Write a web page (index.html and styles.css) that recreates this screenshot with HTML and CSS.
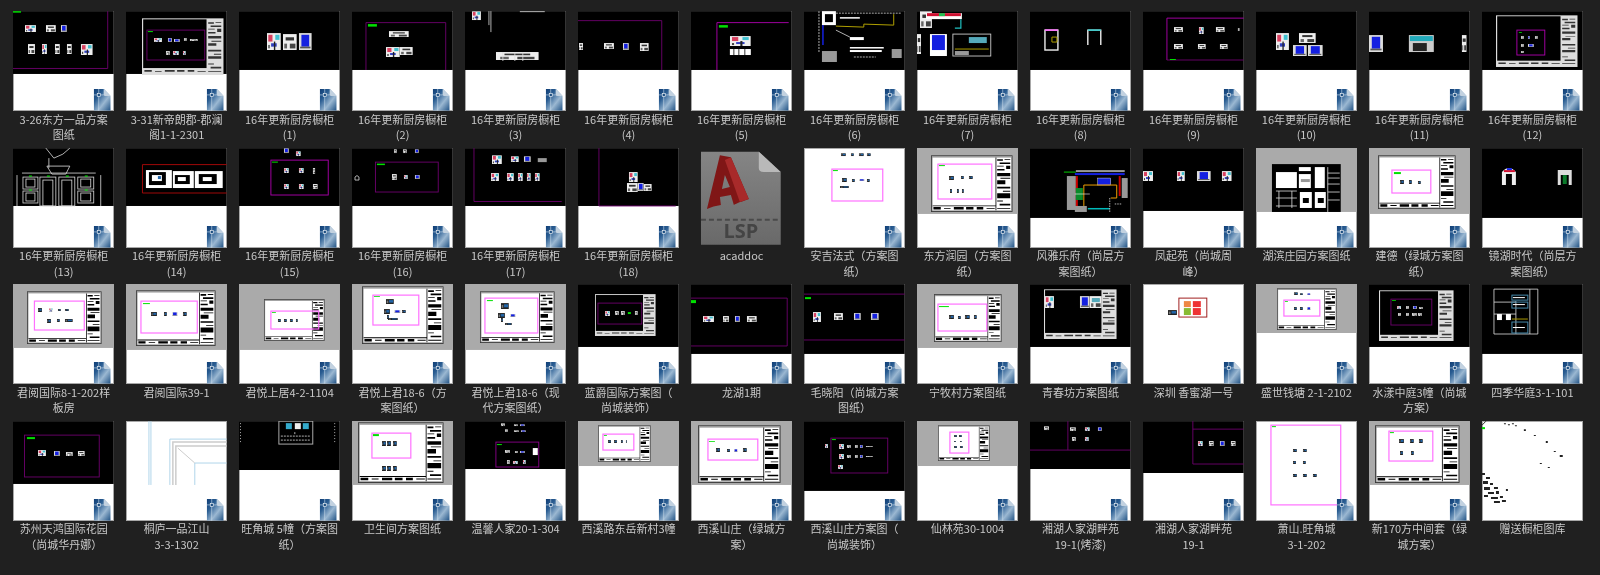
FILE: index.html
```html
<!DOCTYPE html>
<html lang="zh-CN">
<head>
<meta charset="utf-8">
<title>图纸文件夹</title>
<link rel="stylesheet" href="styles.css">
</head>
<body>
<svg class="defs" aria-hidden="true">
<defs>
<linearGradient id="dg" x1="0" y1="0" x2="1" y2="1"><stop offset="0" stop-color="#0f3d75"/><stop offset=".3" stop-color="#2a5d92"/><stop offset=".62" stop-color="#9bb8d2"/><stop offset="1" stop-color="#1d4f82"/></linearGradient>
<linearGradient id="pg" x1="0" y1="0" x2="0" y2="1"><stop offset="0" stop-color="#858585"/><stop offset="1" stop-color="#696969"/></linearGradient>
<symbol id="doc" viewBox="0 0 17 22" preserveAspectRatio="none"><path d="M0 0H10L17 7V22H0Z" fill="url(#dg)"/><path d="M10 0L17 7H11L10 6Z" fill="#c3d2e0"/><path d="M5 0V22M0 6H10" stroke="#cfe0ee" stroke-width=".6" fill="none"/><rect x="3.5" y="4.5" width="3" height="3" fill="#1d4f82" stroke="#fff" stroke-width=".6"/></symbol>
<symbol id="c" viewBox="0 0 10 10" preserveAspectRatio="none"><rect width="10" height="10" fill="#eee"/><rect x="1" y="1" width="3" height="4" fill="#d84060"/><rect x="6" y="1" width="3" height="3" fill="#40c0d0"/><rect x="3" y="6" width="4" height="2" fill="#3040c0"/><rect x="5" y="5" width="1" height="5" fill="#222"/><rect x="1" y="7" width="1" height="2" fill="#444"/></symbol>
<symbol id="u" viewBox="0 0 10 10" preserveAspectRatio="none"><rect width="10" height="10" fill="#ddd"/><rect x="2" y="1" width="6" height="7" fill="#1420e0"/><rect x="1" y="8" width="8" height="1" fill="#555"/></symbol>
<symbol id="o" viewBox="0 0 10 10" preserveAspectRatio="none"><rect width="10" height="10" fill="#eee"/><rect x="2" y="2" width="6" height="2" fill="#333"/><rect x="1" y="6" width="2" height="3" fill="#666"/><rect x="5" y="6" width="4" height="3" fill="#444"/></symbol>
<symbol id="d" viewBox="0 0 10 10" preserveAspectRatio="none"><rect width="10" height="10" fill="#222"/><rect x="4" y="2" width="5" height="5" fill="#26a"/><rect x="1" y="3" width="2" height="5" fill="#777"/></symbol>
<symbol id="sw" viewBox="0 0 100 70" preserveAspectRatio="none"><rect width="100" height="70" fill="#333"/><rect x="1" y="1" width="98" height="68" fill="#999"/><rect x="2" y="3" width="96" height="65" fill="#fff"/><path d="M79 3h1v65h-1zM2 62h77v1H2zM81 5h7v2h-7zM90 5h7v1h-7zM84 9h13v2h-13zM81 13h8v1h-8zM92 13h5v4h-5zM81 17h9v2h-9zM81 22h16v4h-16zM85 28h12v1h-12zM81 31h10v5h-10zM81 39h16v2h-16zM88 44h9v1h-9zM81 47h16v6h-16zM81 56h7v1h-7zM84 60h13v2h-13zM81 65h16v1h-16zM3 64h9v3H3zM16 65h8v1h-8zM28 64h12v3H28zM43 64h9v3h-9zM56 64h8v3h-8zM68 65h10v1H68z" fill="#000"/></symbol>
<symbol id="sk" viewBox="0 0 100 70" preserveAspectRatio="none"><rect width="100" height="70" fill="#ddd"/><rect x="1.500" y="1.500" width="77.500" height="60" fill="#000"/><path d="M81 5h7v2h-7zM90 5h7v1h-7zM84 9h13v2h-13zM81 13h8v1h-8zM92 13h5v4h-5zM81 17h9v2h-9zM81 22h16v3h-16zM85 28h12v1h-12zM81 31h10v3h-10zM81 39h16v2h-16zM88 44h9v1h-9zM81 47h16v3h-16zM81 56h7v1h-7zM84 60h13v2h-13zM81 65h16v1h-16zM3 64h9v2H3zM16 65h8v1h-8zM28 64h12v2H28zM43 64h9v2h-9zM56 64h8v2h-8zM68 65h10v1H68z" fill="#333"/></symbol>
</defs>
</svg>
<main class="grid">

<div class="tile"><div class="thumb"><svg class="pic" viewBox="0 0 101 100"><rect class="k" width="101" height="63"/><path class="pu" d="M0 57.500H95V0"/><rect class="gn" width="8" height="1.500"/><use href="#c" x="12" y="14" width="11" height="7"/><use href="#o" x="33" y="14" width="10" height="7"/><use href="#u" x="48" y="14" width="6" height="7"/><use href="#o" x="15" y="33" width="7" height="10"/><use href="#c" x="29" y="33" width="5" height="10"/><use href="#o" x="42" y="33" width="5" height="10"/><use href="#o" x="54" y="33" width="5" height="10"/><use href="#c" x="68" y="33" width="12" height="11"/><use href="#doc" x="81" y="78" width="17" height="22"/></svg></div><p class="label">3-26东方一品方案<br>图纸</p></div>

<div class="tile"><div class="thumb"><svg class="pic" viewBox="0 0 101 100"><rect class="k" width="101" height="63"/><use href="#sk" x="16" y="7" width="82" height="57"/><rect class="pu" x="21" y="19" width="58" height="30"/><rect class="gn" x="22" y="20" width="5" height="1"/><use href="#c" x="28" y="27" width="8" height="4"/><use href="#u" x="42" y="27" width="4" height="4"/><use href="#u" x="48" y="28" width="6" height="3"/><use href="#o" x="58" y="27" width="3" height="3"/><use href="#o" x="64" y="28" width="8" height="2"/><use href="#o" x="40" y="40" width="4" height="4"/><use href="#c" x="47" y="40" width="6" height="4"/><use href="#c" x="57" y="40" width="3" height="4"/><use href="#doc" x="81" y="78" width="17" height="22"/></svg></div><p class="label">3-31新帝朗郡-郡澜<br>阁1-1-2301</p></div>

<div class="tile"><div class="thumb"><svg class="pic" viewBox="0 0 101 100"><rect class="k" width="101" height="59"/><use href="#c" x="28" y="22" width="14" height="17"/><use href="#o" x="44" y="23" width="14" height="16"/><use href="#u" x="60" y="22" width="13" height="17"/><use href="#doc" x="81" y="78" width="17" height="22"/></svg></div><p class="label">16年更新厨房橱柜<br>(1)</p></div>

<div class="tile"><div class="thumb"><svg class="pic" viewBox="0 0 101 100"><rect class="k" width="101" height="59"/><path class="pu" d="M14 59V11.500H94V59"/><rect class="gn" x="16" y="13" width="9" height="2.500"/><use href="#o" x="37" y="20" width="20" height="6"/><use href="#c" x="34" y="36" width="14" height="10"/><use href="#o" x="48" y="36" width="13" height="8"/><use href="#doc" x="81" y="78" width="17" height="22"/></svg></div><p class="label">16年更新厨房橱柜<br>(2)</p></div>

<div class="tile"><div class="thumb"><svg class="pic" viewBox="0 0 101 100"><rect class="k" width="101" height="59"/><use href="#c" x="7" y="0" width="9" height="9"/><path class="wl" d="M26 0V21M24 0V14M55 .5H80"/><use href="#o" x="31" y="41" width="43" height="8"/><path class="wl" d="M38 41v9M50 41v9M58 41v9"/><use href="#doc" x="81" y="78" width="17" height="22"/></svg></div><p class="label">16年更新厨房橱柜<br>(3)</p></div>

<div class="tile"><div class="thumb"><svg class="pic" viewBox="0 0 101 100"><rect class="k" width="101" height="59"/><path class="pu" d="M0 9.500H84V59"/><use href="#o" x="1" y="32" width="4" height="7"/><use href="#o" x="26" y="32" width="10" height="6"/><use href="#u" x="45" y="32" width="6" height="7"/><use href="#o" x="62" y="32" width="9" height="8"/><use href="#doc" x="81" y="78" width="17" height="22"/></svg></div><p class="label">16年更新厨房橱柜<br>(4)</p></div>

<div class="tile"><div class="thumb"><svg class="pic" viewBox="0 0 101 100"><rect class="k" width="101" height="59"/><path class="mg" d="M26 59V11.500H98"/><rect class="gn" x="28" y="14" width="9" height="2.500"/><use href="#c" x="39" y="25" width="21" height="10"/><rect class="w" x="39" y="38" width="21" height="6"/><path class="kl" d="M43 38v6M48 38v6M54 38v6"/><use href="#doc" x="81" y="78" width="17" height="22"/></svg></div><p class="label">16年更新厨房橱柜<br>(5)</p></div>

<div class="tile"><div class="thumb"><svg class="pic" viewBox="0 0 101 100"><rect class="k" width="101" height="59"/><rect class="w" x="18" y="0" width="14" height="14"/><rect class="k" x="21" y="3" width="8" height="8"/><path class="wl" d="M15 0V42M32 2H97" stroke-dasharray="2 1"/><path class="yl" d="M32 15L60 16V13L90 14V3"/><path class="bl" d="M19 14V34"/><path class="wl" d="M32 19L46 26"/><rect class="gr" x="18" y="40" width="15" height="11"/><rect class="gr" x="88" y="38" width="10" height="9"/><rect class="w" x="46" y="26" width="14" height="3"/><rect class="w" x="46" y="36" width="34" height="1.500"/><rect class="w" x="46" y="39" width="32" height="2"/><path class="wl" d="M50 46H72" stroke-dasharray="2 1"/><rect class="w" x="36" y="6" width="20" height="1.500"/><use href="#doc" x="81" y="78" width="17" height="22"/></svg></div><p class="label">16年更新厨房橱柜<br>(6)</p></div>

<div class="tile"><div class="thumb"><svg class="pic" viewBox="0 0 101 100"><rect class="k" width="101" height="59"/><use href="#o" x="3" y="0" width="12" height="17"/><rect class="w" x="9" y="2" width="36" height="6"/><rect x="10" y="2" width="34" height="3" fill="#d01030"/><rect x="22" y="2" width="6" height="3" fill="#20c050"/><path class="cy" d="M38 17H44V8"/><use href="#o" x="0" y="23" width="4" height="20"/><rect class="w" x="13" y="23" width="17" height="22"/><rect x="15" y="24" width="13" height="15" fill="#1420e0"/><rect x="36" y="23" width="38" height="22" fill="none" stroke="#ccc" stroke-width=".9"/><rect x="52" y="26" width="18" height="6" fill="#5ab"/><path class="yl" d="M38 38H72"/><rect class="gr" x="38" y="40" width="14" height="4"/><use href="#doc" x="81" y="78" width="17" height="22"/></svg></div><p class="label">16年更新厨房橱柜<br>(7)</p></div>

<div class="tile"><div class="thumb"><svg class="pic" viewBox="0 0 101 100"><rect class="k" width="101" height="59"/><rect x="15" y="19" width="13" height="20" fill="#000" stroke="#eee" stroke-width="1.400"/><path d="M15 19H28" stroke="#f6f" stroke-width="1.500"/><path class="yl" d="M22 26h5v5h-5z"/><path d="M58 34V19H71V34" fill="none" stroke="#eee" stroke-width="1.400"/><path d="M58 19H71" stroke="#3cc" stroke-width="1.500"/><use href="#doc" x="81" y="78" width="17" height="22"/></svg></div><p class="label">16年更新厨房橱柜<br>(8)</p></div>

<div class="tile"><div class="thumb"><svg class="pic" viewBox="0 0 101 100"><rect class="k" width="101" height="59"/><path class="mg" d="M24 49V7H101"/><path class="pu" d="M24 49H101"/><rect class="gn" x="27" y="48" width="6" height="1"/><use href="#o" x="31" y="16" width="9" height="5"/><use href="#c" x="56" y="16" width="5" height="7"/><use href="#o" x="73" y="16" width="9" height="5"/><use href="#o" x="95" y="17" width="2" height="3"/><use href="#o" x="31" y="33" width="9" height="5"/><use href="#o" x="55" y="33" width="8" height="5"/><use href="#o" x="77" y="33" width="8" height="5"/><use href="#doc" x="81" y="78" width="17" height="22"/></svg></div><p class="label">16年更新厨房橱柜<br>(9)</p></div>

<div class="tile"><div class="thumb"><svg class="pic" viewBox="0 0 101 100"><rect class="k" width="101" height="59"/><use href="#c" x="20" y="22" width="13" height="17"/><use href="#o" x="43" y="22" width="17" height="10"/><use href="#u" x="37" y="34" width="14" height="11"/><use href="#u" x="52" y="34" width="15" height="11"/><use href="#doc" x="81" y="78" width="17" height="22"/></svg></div><p class="label">16年更新厨房橱柜<br>(10)</p></div>

<div class="tile"><div class="thumb"><svg class="pic" viewBox="0 0 101 100"><rect class="k" width="101" height="59"/><use href="#u" x="0" y="24" width="14" height="17"/><rect x="40" y="24" width="25" height="17" fill="#ccc"/><rect x="41" y="25" width="23" height="5" fill="#2ab"/><rect x="44" y="32" width="14" height="8" fill="#222"/><use href="#o" x="93" y="24" width="5" height="17"/><use href="#doc" x="81" y="78" width="17" height="22"/></svg></div><p class="label">16年更新厨房橱柜<br>(11)</p></div>

<div class="tile"><div class="thumb"><svg class="pic" viewBox="0 0 101 100"><rect class="k" width="101" height="59"/><use href="#sk" x="14" y="4" width="82" height="52"/><rect class="mg" x="35" y="19" width="28" height="25"/><rect class="gn" x="37" y="21" width="3" height=".8"/><use href="#o" x="39" y="25" width="3" height="3"/><use href="#u" x="46" y="25" width="2" height="3"/><use href="#o" x="53" y="25" width="3" height="3"/><use href="#o" x="39" y="33" width="3" height="3"/><use href="#u" x="46" y="33" width="6" height="3"/><use href="#o" x="39" y="40" width="3" height="2"/><use href="#doc" x="81" y="78" width="17" height="22"/></svg></div><p class="label">16年更新厨房橱柜<br>(12)</p></div>

<div class="tile"><div class="thumb"><svg class="pic" viewBox="0 0 101 100"><rect class="k" width="101" height="58"/><path class="wl" d="M33 0L41 10L50 6L57 0M36 10V20M34 18H57L53 26H39ZM9 25H83M4 27V58M88 27V58"/><g class="wl"><rect x="10" y="29" width="15" height="12"/><rect x="13" y="31" width="9" height="8"/><rect x="10" y="43" width="15" height="12"/><rect x="13" y="45" width="9" height="8"/><rect x="27" y="29" width="16" height="29"/><rect x="30" y="32" width="10" height="26"/><rect x="46" y="29" width="16" height="29"/><rect x="49" y="32" width="10" height="26"/><rect x="65" y="29" width="16" height="12"/><rect x="68" y="31" width="10" height="8"/><rect x="65" y="43" width="16" height="12"/><rect x="68" y="45" width="10" height="8"/></g><path d="M16 28h3M34 28h3M53 28h3M72 28h3M16 42h3M72 42h3" stroke="#0f0"/><use href="#doc" x="81" y="78" width="17" height="22"/></svg></div><p class="label">16年更新厨房橱柜<br>(13)</p></div>

<div class="tile"><div class="thumb"><svg class="pic" viewBox="0 0 101 100"><rect class="k" width="101" height="58"/><path class="rd" d="M101 16.500H16.500V45H101"/><rect class="w" x="20" y="22" width="26" height="18"/><rect class="k" x="23" y="24" width="17" height="13"/><rect class="w" x="26" y="27" width="10" height="6"/><rect x="32" y="28" width="3" height="3" fill="#26a"/><rect class="w" x="47" y="23" width="21" height="17"/><rect class="k" x="49" y="27" width="15" height="9"/><rect class="w" x="52" y="29" width="8" height="4"/><rect class="w" x="69" y="23" width="28" height="17"/><rect class="k" x="73" y="26" width="18" height="10"/><rect class="w" x="77" y="29" width="9" height="4"/><use href="#doc" x="81" y="78" width="17" height="22"/></svg></div><p class="label">16年更新厨房橱柜<br>(14)</p></div>

<div class="tile"><div class="thumb"><svg class="pic" viewBox="0 0 101 100"><rect class="k" width="101" height="58"/><rect class="mg" x="32" y="12" width="57.500" height="35"/><rect class="gn" x="33" y="13.500" width="6" height="1"/><use href="#u" x="45" y="0" width="5" height="5"/><use href="#c" x="57" y="3" width="5" height="5"/><use href="#c" x="45" y="20" width="5" height="5"/><use href="#c" x="60" y="20" width="5" height="5"/><use href="#o" x="74" y="20" width="2.500" height="6"/><use href="#c" x="45" y="36" width="5" height="5"/><use href="#c" x="60" y="36" width="5" height="5"/><use href="#o" x="74" y="36" width="5" height="5"/><use href="#doc" x="81" y="78" width="17" height="22"/></svg></div><p class="label">16年更新厨房橱柜<br>(15)</p></div>

<div class="tile"><div class="thumb"><svg class="pic" viewBox="0 0 101 100"><rect class="k" width="101" height="58"/><rect class="pu" x="23.500" y="14" width="63" height="30"/><rect class="gn" x="25" y="15.500" width="8" height="1.500"/><use href="#o" x="42" y="1" width="3" height="4"/><use href="#o" x="51" y="1" width="4" height="4"/><use href="#u" x="63" y="1" width="4" height="4"/><use href="#o" x="40" y="26" width="5" height="6"/><use href="#c" x="52" y="27" width="4" height="4"/><use href="#u" x="63" y="27" width="5" height="4"/><path class="wl" d="M3 32V29Q5 26 7 29V32Z"/><use href="#doc" x="81" y="78" width="17" height="22"/></svg></div><p class="label">16年更新厨房橱柜<br>(16)</p></div>

<div class="tile"><div class="thumb"><svg class="pic" viewBox="0 0 101 100"><rect class="k" width="101" height="58"/><path class="pu" d="M9 0V53.500H97"/><use href="#c" x="27" y="7" width="10" height="9"/><use href="#c" x="46" y="8" width="8" height="6"/><use href="#u" x="59" y="8" width="7" height="6"/><rect class="gr" x="73" y="10" width="9" height="4"/><use href="#c" x="26" y="25" width="8" height="8"/><use href="#c" x="42" y="25" width="7" height="8"/><use href="#c" x="53" y="25" width="5" height="8"/><use href="#c" x="62" y="25" width="4" height="8"/><use href="#c" x="70" y="25" width="5" height="8"/><use href="#doc" x="81" y="78" width="17" height="22"/></svg></div><p class="label">16年更新厨房橱柜<br>(17)</p></div>

<div class="tile"><div class="thumb"><svg class="pic" viewBox="0 0 101 100"><rect class="k" width="101" height="58"/><path class="pu" d="M21 0V58H98"/><use href="#c" x="51" y="24" width="9" height="10"/><use href="#o" x="49" y="35" width="11" height="9"/><use href="#u" x="60" y="35" width="6" height="8"/><use href="#o" x="66" y="36" width="8" height="7"/><use href="#doc" x="81" y="78" width="17" height="22"/></svg></div><p class="label">16年更新厨房橱柜<br>(18)</p></div>

<div class="tile"><div class="thumb"><svg class="pic bare" viewBox="0 0 101 100"><path d="M10 3.500H68L90 24V97H10Z" fill="url(#pg)"/><path d="M68 3.500L90 24H73Q68 24 68 20Z" fill="#b9b9b9"/><path class="dash" d="M10 71.700H90"/><path fill-rule="evenodd" d="M29 7L40 9L58 51C50 54 46 55 43 57L40 47L29 49L30 57C25 58 20 59 16 61ZM34 27L31 41L39 39Z" fill="#801616"/><path d="M40 9L58 51L49 54L34 12Z" fill="#a82a2a"/><text class="lsp" x="50" y="90">LSP</text></svg></div><p class="label">acaddoc</p></div>

<div class="tile"><div class="thumb"><svg class="pic" viewBox="0 0 101 100"><use href="#d" x="37" y="5" width="5" height="3"/><use href="#d" x="47" y="5" width="3" height="3"/><use href="#d" x="55" y="5" width="5" height="3"/><use href="#d" x="63" y="5" width="4" height="3"/><rect class="pk" x="28" y="21" width="51" height="32"/><rect class="gn" x="29" y="22" width="5" height="1"/><use href="#d" x="38" y="30" width="5" height="4"/><use href="#d" x="48" y="31" width="3" height="3"/><use href="#u" x="55" y="31" width="6" height="2"/><use href="#d" x="63" y="31" width="3" height="3"/><use href="#d" x="36" y="38" width="9" height="2"/><use href="#doc" x="81" y="78" width="17" height="22"/></svg></div><p class="label">安吉法式（方案图<br>纸）</p></div>

<div class="tile"><div class="thumb"><svg class="pic" viewBox="0 0 101 100"><rect class="gy" width="101" height="66"/><use href="#sw" x="14" y="7" width="82" height="57"/><rect class="pk" x="21" y="16" width="54" height="35"/><rect class="gn" x="22" y="17" width="6" height="1"/><use href="#d" x="32" y="28" width="5" height="4"/><use href="#d" x="44" y="28" width="3" height="3"/><use href="#d" x="52" y="28" width="4" height="3"/><use href="#d" x="33" y="41" width="2" height="4"/><use href="#d" x="40" y="41" width="2" height="4"/><use href="#d" x="45" y="41" width="2" height="4"/><use href="#doc" x="81" y="78" width="17" height="22"/></svg></div><p class="label">东方润园（方案图<br>纸）</p></div>

<div class="tile"><div class="thumb"><svg class="pic" viewBox="0 0 101 100"><rect class="k" width="101" height="70"/><rect class="gr" x="46" y="22" width="49" height="2"/><rect x="45" y="25" width="50" height="2" fill="#1420e0"/><path d="M34 24H46" stroke="#0c0" stroke-width="1"/><rect class="gr" x="37" y="28" width="9" height="34"/><rect class="gr" x="92" y="30" width="6" height="20"/><path d="M47 28V58" stroke="#c00" stroke-width="2"/><path d="M90 28V48" stroke="#c00" stroke-width="2"/><rect x="68" y="30" width="13" height="7" fill="#1420e0" stroke="#fff" stroke-width=".4"/><path d="M54 58V37H87V50H81" fill="none" stroke="#f0a000"/><rect x="46" y="40" width="7" height="12" fill="#0a8a2a"/><path d="M45 46H60" stroke="#fff" stroke-width=".6"/><rect x="58" y="60" width="22" height="1.500" fill="#0bb"/><rect class="gr" x="45" y="58" width="12" height="6"/><path class="wl" d="M80 50V64M85 56H92" stroke-dasharray="1.500 1"/><use href="#doc" x="81" y="78" width="17" height="22"/></svg></div><p class="label">风雅乐府（尚层方<br>案图纸）</p></div>

<div class="tile"><div class="thumb"><svg class="pic" viewBox="0 0 101 100"><rect class="k" width="101" height="63"/><use href="#c" x="0" y="23" width="10" height="10"/><use href="#c" x="34" y="23" width="8" height="10"/><use href="#u" x="54" y="23" width="14" height="10"/><use href="#c" x="79" y="23" width="10" height="10"/><use href="#doc" x="81" y="78" width="17" height="22"/></svg></div><p class="label">凤起苑（尚城周<br>峰）</p></div>

<div class="tile"><div class="thumb"><svg class="pic" viewBox="0 0 101 100"><rect class="gy" width="101" height="64"/><rect class="k" x="16" y="16" width="69" height="48"/><rect class="w" x="20" y="24" width="21" height="16"/><rect class="w" x="43" y="19" width="12" height="4"/><rect class="w" x="43" y="26" width="12" height="14"/><rect class="gr" x="45" y="31" width="9" height="3"/><rect class="w" x="59" y="19" width="10" height="21"/><path class="wl" d="M72 19V64M72 25H84M72 30H84M72 36H84M72 44H84M72 52H84M20 43H41M20 50H41M20 58H41M23 43V60M36 43V60"/><rect class="w" x="44" y="44" width="12" height="16"/><rect class="k" x="47" y="50" width="6" height="5"/><rect class="w" x="59" y="44" width="11" height="16"/><rect class="k" x="62" y="50" width="6" height="5"/><use href="#doc" x="81" y="78" width="17" height="22"/></svg></div><p class="label">湖滨庄园方案图纸</p></div>

<div class="tile"><div class="thumb"><svg class="pic" viewBox="0 0 101 100"><rect class="gy" width="101" height="66"/><use href="#sw" x="9" y="7" width="78" height="54"/><rect class="pk" x="23" y="22" width="39" height="23"/><rect class="gn" x="25" y="24" width="7" height="2"/><use href="#d" x="31" y="32" width="4" height="4"/><use href="#d" x="40" y="32" width="3" height="4"/><use href="#d" x="49" y="33" width="3" height="3"/><use href="#doc" x="81" y="78" width="17" height="22"/></svg></div><p class="label">建德（绿城方案图<br>纸）</p></div>

<div class="tile"><div class="thumb"><svg class="pic" viewBox="0 0 101 100"><rect class="k" width="101" height="70"/><path d="M20 37V24Q27 16 34 24V37H30V26H24V37Z" fill="#eee"/><path d="M22 23H33" stroke="#d01030" stroke-width="2"/><path d="M25 21H30" stroke="#1420e0" stroke-width="2"/><path d="M76 37V22H90V37H87V27H79V37Z" fill="#ddd"/><rect x="81" y="27" width="4" height="9" fill="#0a7a2a"/><use href="#doc" x="81" y="78" width="17" height="22"/></svg></div><p class="label">镜湖时代（尚层方<br>案图纸）</p></div>

<div class="tile"><div class="thumb"><svg class="pic" viewBox="0 0 101 100"><rect class="gy" width="101" height="64"/><use href="#sw" x="14" y="7" width="75" height="53"/><rect class="pk" x="21.500" y="17" width="50" height="29"/><use href="#d" x="25" y="24" width="4" height="4"/><use href="#c" x="36" y="24" width="4" height="4"/><use href="#d" x="45" y="25" width="3" height="2"/><use href="#d" x="52" y="25" width="4" height="2"/><use href="#d" x="34" y="35" width="4" height="4"/><use href="#d" x="44" y="35" width="3" height="3"/><use href="#d" x="52" y="35" width="8" height="3"/><use href="#doc" x="81" y="78" width="17" height="22"/></svg></div><p class="label">君阅国际8-1-202样<br>板房</p></div>

<div class="tile"><div class="thumb"><svg class="pic" viewBox="0 0 101 100"><rect class="gy" width="101" height="66"/><use href="#sw" x="10" y="6" width="80" height="56"/><rect class="pk" x="15" y="17" width="56.500" height="32"/><rect class="gn" x="17" y="19" width="7" height="1"/><use href="#d" x="25" y="28" width="6" height="4"/><use href="#d" x="38" y="28" width="3" height="4"/><use href="#u" x="46" y="28" width="6" height="4"/><use href="#d" x="57" y="28" width="4" height="4"/><use href="#doc" x="81" y="78" width="17" height="22"/></svg></div><p class="label">君阅国际39-1</p></div>

<div class="tile"><div class="thumb"><svg class="pic" viewBox="0 0 101 100"><rect class="gy" width="101" height="66"/><use href="#sw" x="25" y="15" width="61" height="42"/><rect class="pk" x="32" y="27" width="48" height="18"/><rect class="gn" x="33" y="28" width="4" height=".8"/><use href="#d" x="39" y="35" width="3" height="3"/><use href="#d" x="45" y="35" width="3" height="3"/><use href="#d" x="51" y="35" width="3" height="3"/><use href="#d" x="57" y="35" width="2" height="3"/><use href="#doc" x="81" y="78" width="17" height="22"/></svg></div><p class="label">君悦上居4-2-1104</p></div>

<div class="tile"><div class="thumb"><svg class="pic" viewBox="0 0 101 100"><rect class="gy" width="101" height="66"/><use href="#sw" x="10" y="2" width="82" height="58"/><rect class="pk" x="21" y="11" width="46" height="30"/><rect class="gn" x="22" y="12" width="6" height=".8"/><use href="#d" x="34" y="15" width="8" height="5"/><use href="#d" x="32" y="25" width="6" height="5"/><use href="#u" x="42" y="26" width="7" height="3"/><use href="#d" x="50" y="26" width="4" height="3"/><use href="#d" x="35" y="31" width="2" height="4"/><use href="#d" x="36" y="34" width="10" height="2"/><use href="#doc" x="81" y="78" width="17" height="22"/></svg></div><p class="label">君悦上君18-6（方<br>案图纸）</p></div>

<div class="tile"><div class="thumb"><svg class="pic" viewBox="0 0 101 100"><rect class="gy" width="101" height="66"/><use href="#sw" x="15" y="7" width="75" height="52"/><rect class="pk" x="20" y="14" width="53" height="35"/><rect class="gn" x="22" y="16" width="6" height="1"/><use href="#d" x="36" y="19" width="8" height="6"/><use href="#d" x="33" y="29" width="7" height="5"/><use href="#u" x="45" y="30" width="6" height="3"/><use href="#d" x="36" y="34" width="2" height="4"/><use href="#d" x="40" y="39" width="7" height="2"/><use href="#doc" x="81" y="78" width="17" height="22"/></svg></div><p class="label">君悦上君18-6（现<br>代方案图纸）</p></div>

<div class="tile"><div class="thumb"><svg class="pic" viewBox="0 0 101 100"><rect class="k" width="101" height="63"/><use href="#sk" x="17" y="10" width="61" height="42"/><rect class="pu" x="20" y="19" width="44" height="21"/><use href="#c" x="27" y="27" width="5" height="5"/><use href="#o" x="37" y="27" width="4" height="4"/><use href="#o" x="43" y="27" width="4" height="4"/><rect class="gn" x="50" y="28" width="3" height="2"/><use href="#o" x="57" y="27" width="3" height="4"/><use href="#doc" x="81" y="78" width="17" height="22"/></svg></div><p class="label">蓝爵国际方案图（<br>尚城装饰）</p></div>

<div class="tile"><div class="thumb"><svg class="pic" viewBox="0 0 101 100"><rect class="k" width="101" height="70"/><path class="pu" d="M0 14H96.500V62H0"/><rect class="gn" x="0" y="16" width="5" height="3"/><use href="#c" x="12" y="32" width="11" height="6"/><use href="#o" x="32" y="32" width="6" height="6"/><use href="#u" x="44" y="32" width="5" height="6"/><use href="#o" x="56" y="32" width="10" height="6"/><use href="#doc" x="81" y="78" width="17" height="22"/></svg></div><p class="label">龙湖1期</p></div>

<div class="tile"><div class="thumb"><svg class="pic" viewBox="0 0 101 100"><rect class="k" width="101" height="70"/><path class="pu" d="M0 10H101M0 56H101"/><rect class="gn" x="1" y="13" width="6" height="2"/><use href="#c" x="9" y="28" width="8" height="10"/><use href="#o" x="30" y="29" width="9" height="7"/><use href="#u" x="50" y="29" width="7" height="7"/><use href="#u" x="67" y="29" width="8" height="7"/><use href="#doc" x="81" y="78" width="17" height="22"/></svg></div><p class="label">毛晓阳（尚城方案<br>图纸）</p></div>

<div class="tile"><div class="thumb"><svg class="pic" viewBox="0 0 101 100"><rect class="gy" width="101" height="64"/><use href="#sw" x="17" y="10" width="68" height="48"/><rect class="pk" x="21" y="20" width="49" height="27"/><rect class="gn" x="22" y="22" width="10" height="1"/><use href="#d" x="32" y="31" width="5" height="4"/><use href="#d" x="41" y="32" width="3" height="3"/><use href="#d" x="48" y="31" width="5" height="4"/><use href="#d" x="57" y="31" width="3" height="4"/><use href="#doc" x="81" y="78" width="17" height="22"/></svg></div><p class="label">宁牧村方案图纸</p></div>

<div class="tile"><div class="thumb"><svg class="pic" viewBox="0 0 101 100"><rect class="k" width="101" height="63"/><use href="#sk" x="14" y="5" width="73" height="50"/><use href="#c" x="15" y="12" width="9" height="12"/><use href="#u" x="50" y="12" width="10" height="12"/><use href="#o" x="60" y="12" width="12" height="12"/><rect x="62" y="14" width="8" height="4" fill="#5ab"/><use href="#doc" x="81" y="78" width="17" height="22"/></svg></div><p class="label">青春坊方案图纸</p></div>

<div class="tile"><div class="thumb"><svg class="pic" viewBox="0 0 101 100"><use href="#d" x="25" y="26" width="9" height="5"/><rect x="36" y="14" width="28" height="19" fill="#fff" stroke="#a02020" stroke-width="1"/><rect x="41" y="17" width="7" height="6" fill="#e84"/><rect x="50" y="17" width="8" height="6" fill="#e33"/><rect x="41" y="24" width="7" height="7" fill="#8b3"/><rect x="50" y="24" width="8" height="7" fill="#e33"/><use href="#doc" x="81" y="78" width="17" height="22"/></svg></div><p class="label">深圳 香蜜湖一号</p></div>

<div class="tile"><div class="thumb"><svg class="pic" viewBox="0 0 101 100"><rect class="gy" width="101" height="49"/><use href="#sw" x="21" y="4" width="60" height="42"/><rect class="pk" x="28" y="16" width="36" height="16"/><rect class="gn" x="29" y="17" width="3" height=".8"/><use href="#d" x="38" y="8" width="4" height="3"/><use href="#d" x="44" y="9" width="3" height="2"/><use href="#u" x="51" y="9" width="4" height="2"/><use href="#d" x="38" y="23" width="3" height="3"/><use href="#d" x="44" y="23" width="3" height="3"/><use href="#u" x="51" y="23" width="4" height="3"/><use href="#doc" x="81" y="78" width="17" height="22"/></svg></div><p class="label">盛世钱塘 2-1-2102</p></div>

<div class="tile"><div class="thumb"><svg class="pic" viewBox="0 0 101 100"><rect class="k" width="101" height="63"/><use href="#sk" x="10" y="6" width="75" height="51"/><rect class="pu" x="22" y="15" width="41" height="26"/><rect class="gn" x="23" y="16" width="4" height=".8"/><use href="#c" x="28" y="22" width="4" height="3"/><use href="#o" x="37" y="22" width="3" height="3"/><use href="#u" x="44" y="22" width="4" height="3"/><use href="#o" x="50" y="23" width="4" height="2"/><use href="#o" x="29" y="29" width="3" height="3"/><use href="#o" x="37" y="29" width="3" height="3"/><use href="#o" x="43" y="29" width="5" height="3"/><use href="#o" x="49" y="29" width="4" height="3"/><use href="#doc" x="81" y="78" width="17" height="22"/></svg></div><p class="label">水漾中庭3幢（尚城<br>方案）</p></div>

<div class="tile"><div class="thumb"><svg class="pic" viewBox="0 0 101 100"><rect class="k" width="101" height="70"/><path class="wl" d="M12 5H56V50H34V17M12 5V50H34M12 18H34M12 30H34M48 5V50" stroke-width=".6"/><rect x="30" y="11" width="16" height="5" fill="none" stroke="#48a"/><rect x="30" y="18" width="16" height="6" fill="none" stroke="#48a"/><rect x="30" y="38" width="16" height="11" fill="none" stroke="#48a"/><rect class="w" x="31" y="13" width="12" height="1"/><rect class="w" x="31" y="20" width="12" height="1"/><rect class="w" x="31" y="43" width="12" height="1"/><path d="M30 35H46" stroke="#a90"/><rect class="w" x="15" y="30" width="5" height="6"/><rect class="w" x="24" y="30" width="5" height="6"/><use href="#doc" x="81" y="78" width="17" height="22"/></svg></div><p class="label">四季华庭3-1-101</p></div>

<div class="tile"><div class="thumb"><svg class="pic" viewBox="0 0 101 100"><rect class="k" width="101" height="63"/><rect class="pu" x="11.500" y="14" width="75" height="42"/><rect class="gn" x="14" y="16" width="8" height="2"/><use href="#c" x="25" y="29" width="8" height="6"/><use href="#u" x="41" y="30" width="6" height="5"/><use href="#o" x="53" y="31" width="7" height="4"/><use href="#o" x="65" y="30" width="7" height="5"/><use href="#doc" x="81" y="78" width="17" height="22"/></svg></div><p class="label">苏州天鸿国际花园<br>（尚城华丹娜）</p></div>

<div class="tile"><div class="thumb"><svg class="pic" viewBox="0 0 101 100"><path d="M23 0V64M25 0V64M44 64V18H101M69 64V42H101" fill="none" stroke="#a8d0e8" stroke-width=".9"/><path d="M47 64V21H101M50 64V25H101" fill="none" stroke="#ccc" stroke-width="1.500"/><path d="M52 27L69 42" stroke="#ccc"/><use href="#doc" x="81" y="78" width="17" height="22"/></svg></div><p class="label">桐庐一品江山<br>3-3-1302</p></div>

<div class="tile"><div class="thumb"><svg class="pic" viewBox="0 0 101 100"><rect class="k" width="101" height="49"/><rect x="40" y="0" width="34" height="23" fill="none" stroke="#aaa"/><rect x="47" y="2" width="6" height="6" fill="#3ac"/><rect x="56" y="2" width="6" height="6" fill="#eee"/><rect x="64" y="2" width="6" height="6" fill="#3ac"/><path class="wl" d="M42 15H72M42 19H72M56 11V14" stroke-dasharray="2 1"/><path class="wl" d="M1.500 2V22M96 2V22" stroke-dasharray="1 2"/><use href="#doc" x="81" y="78" width="17" height="22"/></svg></div><p class="label">旺角城 5幢（方案图<br>纸）</p></div>

<div class="tile"><div class="thumb"><svg class="pic" viewBox="0 0 101 100"><rect class="gy" width="101" height="64"/><use href="#sw" x="6" y="1" width="86" height="61"/><rect class="pk" x="20" y="12" width="39" height="25"/><rect class="gn" x="21" y="13" width="6" height="2"/><use href="#d" x="30" y="20" width="4" height="5"/><use href="#d" x="35" y="20" width="4" height="5"/><use href="#d" x="41" y="20" width="4" height="5"/><use href="#d" x="30" y="45" width="4" height="5"/><use href="#d" x="35" y="45" width="4" height="5"/><use href="#d" x="41" y="45" width="4" height="5"/><use href="#doc" x="81" y="78" width="17" height="22"/></svg></div><p class="label">卫生间方案图纸</p></div>

<div class="tile"><div class="thumb"><svg class="pic" viewBox="0 0 101 100"><rect class="k" width="101" height="48"/><rect class="mgd" x="31" y="21" width="43" height="25"/><rect class="gn" x="32" y="23" width="5" height="1"/><use href="#o" x="36" y="2" width="4" height="3"/><use href="#o" x="49" y="3" width="4" height="2"/><use href="#u" x="55" y="3" width="5" height="2"/><use href="#o" x="40" y="8" width="3" height="3"/><use href="#o" x="49" y="9" width="5" height="2"/><use href="#u" x="56" y="9" width="5" height="2"/><use href="#o" x="40" y="29" width="5" height="3"/><use href="#o" x="50" y="30" width="3" height="2"/><use href="#u" x="55" y="30" width="5" height="2"/><rect class="w" x="68" y="27" width="5" height="7"/><use href="#o" x="42" y="39" width="3" height="4"/><use href="#c" x="48" y="40" width="5" height="3"/><use href="#c" x="58" y="39" width="3" height="4"/><use href="#doc" x="81" y="78" width="17" height="22"/></svg></div><p class="label">温馨人家20-1-304</p></div>

<div class="tile"><div class="thumb"><svg class="pic" viewBox="0 0 101 100"><rect class="gy" width="101" height="45"/><use href="#sw" x="20" y="4" width="53" height="37"/><rect class="pk" x="25" y="13" width="31" height="16"/><rect class="gn" x="26" y="14" width="3" height=".8"/><use href="#d" x="30" y="19" width="3" height="3"/><use href="#d" x="36" y="19" width="3" height="3"/><use href="#d" x="43" y="19" width="2" height="3"/><use href="#d" x="48" y="19" width="1" height="3"/><use href="#doc" x="81" y="78" width="17" height="22"/></svg></div><p class="label">西溪路东岳新村3幢</p></div>

<div class="tile"><div class="thumb"><svg class="pic" viewBox="0 0 101 100"><rect class="gy" width="101" height="64"/><use href="#sw" x="7" y="4" width="83" height="58"/><rect class="pk" x="17" y="18" width="50" height="21"/><rect class="gn" x="18" y="20" width="6" height=".8"/><use href="#d" x="25" y="27" width="4" height="4"/><use href="#d" x="36" y="28" width="3" height="3"/><use href="#u" x="43" y="28" width="4" height="3"/><use href="#d" x="52" y="27" width="4" height="4"/><use href="#doc" x="81" y="78" width="17" height="22"/></svg></div><p class="label">西溪山庄（绿城方<br>案）</p></div>

<div class="tile"><div class="thumb"><svg class="pic" viewBox="0 0 101 100"><rect class="k" width="101" height="70"/><rect class="pu" x="27" y="17" width="57" height="35"/><rect class="gn" x="28" y="18" width="4" height="1"/><use href="#c" x="21" y="23" width="3" height="4"/><use href="#c" x="35" y="23" width="5" height="5"/><use href="#o" x="43" y="24" width="4" height="3"/><use href="#o" x="51" y="24" width="3" height="3"/><use href="#u" x="56" y="24" width="3" height="3"/><use href="#o" x="62" y="25" width="7" height="1"/><use href="#c" x="35" y="33" width="5" height="5"/><use href="#o" x="43" y="34" width="4" height="3"/><use href="#o" x="51" y="34" width="3" height="3"/><use href="#u" x="56" y="34" width="3" height="3"/><use href="#o" x="62" y="35" width="7" height="1"/><use href="#c" x="34" y="44" width="5" height="4"/><use href="#doc" x="81" y="78" width="17" height="22"/></svg></div><p class="label">西溪山庄方案图（<br>尚城装饰）</p></div>

<div class="tile"><div class="thumb"><svg class="pic" viewBox="0 0 101 100"><rect class="gy" width="101" height="45"/><use href="#sw" x="21" y="4" width="52" height="36"/><rect class="pk" x="33" y="11" width="19" height="21"/><use href="#d" x="37" y="14" width="3" height="2"/><use href="#d" x="42" y="14" width="3" height="2"/><use href="#d" x="37" y="20" width="2" height="1"/><use href="#d" x="43" y="20" width="2" height="1"/><use href="#d" x="37" y="25" width="3" height="2"/><use href="#d" x="43" y="25" width="3" height="2"/><use href="#doc" x="81" y="78" width="17" height="22"/></svg></div><p class="label">仙林苑30-1004</p></div>

<div class="tile"><div class="thumb"><svg class="pic" viewBox="0 0 101 100"><rect class="k" width="101" height="48"/><path class="pu" d="M0 29H101M38 0V29"/><use href="#o" x="14" y="5" width="5" height="4"/><use href="#o" x="40" y="6" width="6" height="4"/><use href="#c" x="55" y="6" width="5" height="4"/><use href="#u" x="68" y="6" width="4" height="4"/><use href="#o" x="42" y="16" width="4" height="4"/><use href="#c" x="55" y="16" width="4" height="4"/><use href="#doc" x="81" y="78" width="17" height="22"/></svg></div><p class="label">湘湖人家湖畔苑<br>19-1(烤漆)</p></div>

<div class="tile"><div class="thumb"><svg class="pic" viewBox="0 0 101 100"><rect class="k" width="101" height="52"/><path class="pu" d="M50 0V43H101M50 8H101"/><use href="#c" x="55" y="20" width="5" height="5"/><use href="#o" x="66" y="20" width="5" height="5"/><use href="#u" x="77" y="20" width="5" height="5"/><use href="#o" x="88" y="20" width="5" height="5"/><use href="#doc" x="81" y="78" width="17" height="22"/></svg></div><p class="label">湘湖人家湖畔苑<br>19-1</p></div>

<div class="tile"><div class="thumb"><svg class="pic" viewBox="0 0 101 100"><rect class="pk" x="15" y="4" width="70" height="80"/><rect class="gn" x="16" y="5" width="4" height="1"/><use href="#d" x="37" y="28" width="4" height="3"/><use href="#d" x="47" y="28" width="4" height="3"/><use href="#d" x="37" y="40" width="3" height="3"/><use href="#d" x="47" y="40" width="3" height="3"/><use href="#d" x="37" y="53" width="4" height="3"/><use href="#d" x="47" y="53" width="4" height="3"/><use href="#d" x="57" y="53" width="4" height="3"/><use href="#doc" x="81" y="78" width="17" height="22"/></svg></div><p class="label">萧山.旺角城<br>3-1-202</p></div>

<div class="tile"><div class="thumb"><svg class="pic" viewBox="0 0 101 100"><rect class="gy" width="101" height="64"/><use href="#sw" x="6" y="4" width="85" height="58"/><rect class="pk" x="20" y="10" width="44" height="30"/><rect class="gn" x="21" y="11" width="4" height="1"/><use href="#d" x="30" y="18" width="5" height="4"/><use href="#d" x="41" y="18" width="4" height="4"/><use href="#d" x="50" y="18" width="4" height="4"/><use href="#d" x="31" y="30" width="3" height="4"/><use href="#d" x="42" y="30" width="3" height="4"/><use href="#doc" x="81" y="78" width="17" height="22"/></svg></div><p class="label">新170方中间套（绿<br>城方案）</p></div>

<div class="tile"><div class="thumb"><svg class="pic" viewBox="0 0 101 100"><path d="M0 4L4 0" stroke="#333"/><rect class="gn" x="0" y="6" width="3" height="2"/><path class="spk" d="M22 2h2v1h-2zM26 3h2v1h-2zM30 2h2v1h-2zM33 4h2v1h-2zM42 8h2v2h-2zM52 14h2v1h-2zM64 20h2v2h-2zM72 30h2v1h-2zM78 34h3v2h-3zM58 42h2v1h-2zM66 46h2v1h-2zM0 52h3v2h-3zM4 56h4v2h-4zM1 60h5v3h-5zM8 62h3v2h-3zM2 66h6v3h-6zM12 66h4v2h-4zM6 71h6v2h-6zM14 70h3v3h-3zM2 74h4v2h-4zM9 76h7v2h-7zM18 75h3v2h-3zM12 80h6v2h-6zM20 79h4v2h-4zM24 68h2v2h-2z"/></svg></div><p class="label">赠送橱柜图库</p></div>

</main>
</body>
</html>
```
FILE: styles.css
```css
html, body {
  margin: 0;
  padding: 0;
  height: 575px;
  overflow: hidden;
  background: #202020;
}
.defs {
  display: block;
  width: 0;
  height: 0;
  overflow: hidden;
}
.grid {
  display: grid;
  grid-template-columns: repeat(14, 100.7px);
  grid-auto-rows: 136.67px;
  column-gap: 12.3px;
  padding: 11px 0 0 13.3px;
}
.tile {
  display: flex;
  flex-direction: column;
  align-items: stretch;
}
.thumb {
  height: 100px;
  flex: none;
}
.pic {
  display: block;
  width: 100%;
  height: 100%;
  background: #fff;
  box-shadow: inset 0 0 0 1px #a8a8a8;
  filter: blur(.35px);
}
.pic.bare {
  background: none;
  box-shadow: none;
}
.label {
  margin: 0;
  padding-top: .5px;
  font: 11px/15.5px "Noto Sans CJK SC", "Noto Sans", sans-serif;
  color: #c8c8c8;
  text-align: center;
  white-space: nowrap;
  filter: blur(.25px);
}
.k { fill: #000; }
.gy { fill: #aaa; }
.w { fill: #fff; }
.gr { fill: #999; }
.gn { fill: #00e000; }
.pu { fill: none; stroke: #6e006e; stroke-width: .9; }
.mg { fill: none; stroke: #b000b0; stroke-width: .9; }
.mgd { fill: none; stroke: #8a008a; stroke-width: .9; }
.pk { fill: none; stroke: #ff70ff; stroke-width: 1.2; }
.rd { fill: none; stroke: #a00808; stroke-width: 1; }
.wl { fill: none; stroke: #ddd; stroke-width: .8; }
.kl { fill: none; stroke: #000; stroke-width: .8; }
.yl { fill: none; stroke: #b0a000; stroke-width: 1; }
.bl { fill: none; stroke: #1420e0; stroke-width: 1.5; }
.cy { fill: none; stroke: #20c0c0; stroke-width: 1.2; }
.spk { fill: #222; }
.dash { fill: none; stroke: #4a4a4a; stroke-width: 2; stroke-dasharray: 5 3; }
.lsp { font: bold 20px "Open Sans", "Liberation Sans", sans-serif; fill: #444; text-anchor: middle; }
```
